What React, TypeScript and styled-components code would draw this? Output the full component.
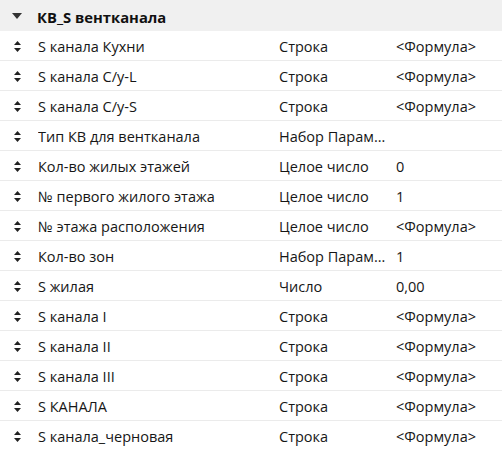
import React from "react";
import styled, { createGlobalStyle } from "styled-components";

const Global = createGlobalStyle`
  html, body { margin: 0; padding: 0; background: #ffffff; }
  body { font-family: "Open Sans", "Noto Sans", Arial, sans-serif; }
`;

const Panel = styled.div`
  width: 502px;
  background: #ffffff;
  color: #161616;
  font-family: "Open Sans", "Noto Sans", sans-serif;
  font-size: 14.5px;
`;

const Header = styled.div`
  height: 31px;
  display: flex;
  align-items: center;
  background: #f0f0f0;
  padding-left: 12px;
  gap: 15px;
`;

const HeaderTitle = styled.span`
  font-weight: 700;
  font-size: 14.8px;
  color: #111111;
  padding-top: 2px;
`;

const Row = styled.div`
  height: 29px;
  display: grid;
  grid-template-columns: 38px 241px 117px 1fr;
  align-items: center;
  border-bottom: 1px solid #ebebeb;
`;

const HandleCell = styled.div`
  display: flex;
  align-items: center;
  padding-left: 14px;
  padding-top: 1px;
`;

const Cell = styled.div`
  white-space: nowrap;
  overflow: hidden;
  text-overflow: ellipsis;
  padding-right: 6px;
  padding-top: 2px;
`;

const Caret = () => (
  <svg width="10" height="6" viewBox="0 0 10 6">
    <path d="M0 0 L10 0 L5 6 Z" fill="#333333" />
  </svg>
);

const SortIcon = () => (
  <svg width="7" height="11" viewBox="0 0 7 11">
    <path d="M3.5 0 L7 4 L0 4 Z" fill="#222222" />
    <path d="M0 7 L7 7 L3.5 11 Z" fill="#222222" />
  </svg>
);

const rows: [string, string, string][] = [
  ["S канала Кухни", "Строка", "<Формула>"],
  ["S канала С/у-L", "Строка", "<Формула>"],
  ["S канала С/у-S", "Строка", "<Формула>"],
  ["Тип КВ для вентканала", "Набор Параметров", ""],
  ["Кол-во жилых этажей", "Целое число", "0"],
  ["№ первого жилого этажа", "Целое число", "1"],
  ["№ этажа расположения", "Целое число", "<Формула>"],
  ["Кол-во зон", "Набор Параметров", "1"],
  ["S жилая", "Число", "0,00"],
  ["S канала I", "Строка", "<Формула>"],
  ["S канала II", "Строка", "<Формула>"],
  ["S канала III", "Строка", "<Формула>"],
  ["S КАНАЛА", "Строка", "<Формула>"],
  ["S канала_черновая", "Строка", "<Формула>"],
];

export default function App() {
  return (
    <>
      <Global />
      <Panel>
        <Header>
          <Caret />
          <HeaderTitle>КВ_S вентканала</HeaderTitle>
        </Header>
        {rows.map(([name, type, value], i) => (
          <Row key={i}>
            <HandleCell>
              <SortIcon />
            </HandleCell>
            <Cell>{name}</Cell>
            <Cell>{type}</Cell>
            <Cell>{value}</Cell>
          </Row>
        ))}
      </Panel>
    </>
  );
}
